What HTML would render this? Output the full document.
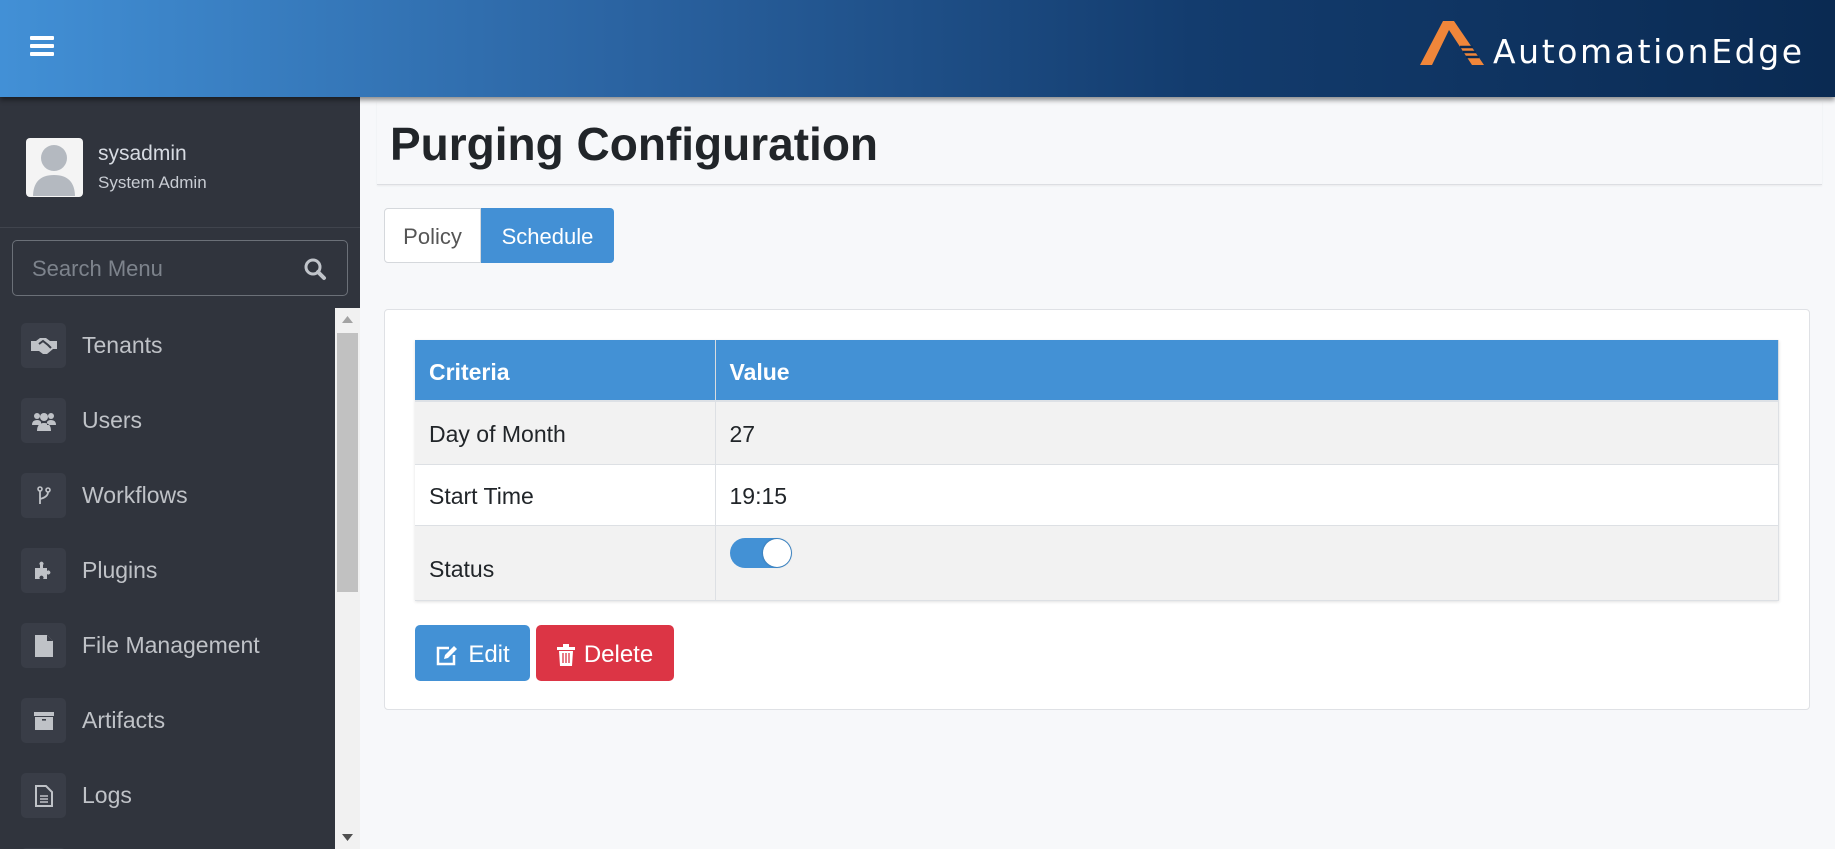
<!DOCTYPE html>
<html><head><meta charset="utf-8"><style>
*{box-sizing:border-box;margin:0;padding:0}
html,body{width:1835px;height:849px;overflow:hidden}
body{background:#f7f8fa;font-family:"Segoe UI","Liberation Sans",sans-serif;position:relative}
.hdr{position:absolute;left:0;top:0;width:1835px;height:97px;background:linear-gradient(90deg,#4290d6 0%,#2a62a0 35%,#133c6e 65%,#0a2a52 100%);box-shadow:0 3px 5px rgba(0,0,0,.45);z-index:3}
.burger{position:absolute;left:30px;top:36px;width:24px}
.burger i{display:block;height:4px;background:#fff;margin-bottom:4px;border-radius:1px}
.logo{position:absolute;left:1420px;top:18px}
.logotxt{position:absolute;left:1493px;top:32px;color:#fff;font-size:33px;font-family:"DejaVu Sans","Liberation Sans",sans-serif;letter-spacing:2.6px}
.side{position:absolute;left:0;top:97px;width:360px;height:752px;background:#30343d;overflow:hidden}
.av{position:absolute;left:26px;top:41px;width:57px;height:59px;background:#f4f4f4;border-radius:4px;overflow:hidden}
.uname{position:absolute;left:98px;top:45px;color:#d7dbe2;font-size:21px}
.urole{position:absolute;left:98px;top:76px;color:#c8ccd3;font-size:17px}
.div{position:absolute;left:0;top:130px;width:360px;height:1px;background:#40444d}
.search{position:absolute;left:12px;top:143px;width:336px;height:56px;border:1px solid #6b7078;border-radius:5px}
.search span{position:absolute;left:19px;top:15px;font-size:22px;color:#7d838c;font-weight:300}
.search svg{position:absolute;left:290px;top:16px}
.item{position:absolute;left:21px;width:300px;height:45px}
.item .ib{position:absolute;left:0;top:0;width:45px;height:45px;background:#393d47;border-radius:5px;display:flex;align-items:center;justify-content:center}
.item .t{position:absolute;left:61px;top:9px;font-size:23px;color:#bfc2c7;font-weight:300;white-space:nowrap}
.sb{position:absolute;left:335px;top:211px;width:25px;height:541px;background:#f1f1f1}
.sb .th{position:absolute;left:2px;top:25px;width:21px;height:259px;background:#c1c1c1}
.title{position:absolute;left:377px;top:101px;width:1445px;height:84px;background:#f7f8fa;border-bottom:1px solid #dcdee2;box-shadow:0 1px 2px rgba(0,0,0,.06)}
.title h1{position:absolute;left:13px;top:16px;font-size:46px;font-weight:600;color:#212529}
.tabs{position:absolute;left:384px;top:208px;height:55px;display:flex;font-size:22px}
.tab1{width:97px;border:1px solid #d5d8dc;border-radius:4px 0 0 4px;background:#fff;color:#555;text-align:center;line-height:56px}
.tab2{width:133px;background:#4390d5;color:#fff;border-radius:0 4px 4px 0;text-align:center;line-height:58px}
.card{position:absolute;left:384px;top:309px;width:1426px;height:401px;background:#fff;border:1px solid #dfe1e5;border-radius:4px}
table{position:absolute;left:415px;top:340px;width:1364px;border-collapse:collapse;font-size:23px;color:#212529;box-shadow:0 1px 3px rgba(0,0,0,.12)}
th{background:#4391d5;color:#fff;text-align:left;font-weight:700;height:61px;padding:4px 0 0 14px;border-right:1px solid #d8dce0;border-bottom:2px solid #dde1e6}
td{padding:4px 0 0 14px;border:1px solid #dde0e4;border-left:none}
td:first-child,th:first-child{width:300px}
tr.g td{background:#f2f2f2}
.btn{position:absolute;top:625px;height:56px;border-radius:5px;color:#fff;font-size:24px;display:flex;align-items:center;justify-content:center;gap:9px;padding-top:3px}
</style></head><body>
<div class="hdr">
 <div class="burger"><i></i><i></i><i></i></div>
 <svg class="logo" width="70" height="50" viewBox="0 0 70 50"><path d="M0 47 L23 3 L34 3 L64 47 L52 47 L29 12 L12 47Z" fill="#f0863a"/><path d="M40 29 h13 M43 34 h13 M46 39 h13" stroke="#0a2a52" stroke-width="2.5"/></svg>
 <div class="logotxt">AutomationEdge</div>
</div>
<div class="side">
 <div class="av"><svg width="57" height="59" viewBox="0 0 57 59"><circle cx="28" cy="20" r="13" fill="#b4b9c0"/><path d="M6 59 Q6 36 28 36 Q50 36 50 59Z" fill="#b4b9c0" stroke="#f4f4f4" stroke-width="2"/></svg></div>
 <div class="uname">sysadmin</div>
 <div class="urole">System Admin</div>
 <div class="div"></div>
 <div class="search"><span>Search Menu</span><svg width="24" height="24" viewBox="0 0 24 24"><circle cx="10" cy="10" r="7" fill="none" stroke="#c0c4ca" stroke-width="3"/><path d="M15 15 L21 21" stroke="#c0c4ca" stroke-width="4" stroke-linecap="round"/></svg></div>
 <div class="item" style="top:226px"><div class="ib"><svg width="28" height="18" viewBox="0 0 28 18"><path d="M1 4h5l4-3h6l4 3h7v8h-4l-6 5h-4l-4-3H1z" fill="#bfc2c7"/><path d="M9 7l4-3 5 4 3 3" stroke="#393d47" stroke-width="2" fill="none"/></svg></div><div class="t">Tenants</div></div>
 <div class="item" style="top:301px"><div class="ib"><svg width="24" height="20" viewBox="0 0 24 20"><circle cx="5" cy="5" r="3" fill="#bfc2c7"/><circle cx="19" cy="5" r="3" fill="#bfc2c7"/><circle cx="12" cy="6" r="4" fill="#bfc2c7"/><path d="M0 14q0-5 5-5q3 0 4 2v3zM24 14q0-5-5-5q-3 0-4 2v3zM5 20q0-8 7-8q7 0 7 8z" fill="#bfc2c7"/></svg></div><div class="t">Users</div></div>
 <div class="item" style="top:376px"><div class="ib"><svg width="14" height="20" viewBox="0 0 14 20"><circle cx="3" cy="3" r="2" fill="none" stroke="#bfc2c7" stroke-width="1.6"/><circle cx="11" cy="4" r="2" fill="none" stroke="#bfc2c7" stroke-width="1.6"/><path d="M3 5v13M11 6q0 5-8 7" stroke="#bfc2c7" stroke-width="1.8" fill="none"/></svg></div><div class="t">Workflows</div></div>
 <div class="item" style="top:451px"><div class="ib"><svg width="22" height="20" viewBox="0 0 22 20"><path d="M2 7h5V4a2 2 0 1 1 3 0v3h4v3a2 2 0 1 1 0 3v5H10a2 2 0 1 0-3 0H2z" fill="#bfc2c7"/></svg></div><div class="t">Plugins</div></div>
 <div class="item" style="top:526px"><div class="ib"><svg width="20" height="24" viewBox="0 0 20 24"><path d="M1 1h12l6 6v16H1z" fill="#bfc2c7"/><path d="M13 1v6h6" fill="#393d47"/></svg></div><div class="t">File Management</div></div>
 <div class="item" style="top:601px"><div class="ib"><svg width="20" height="18" viewBox="0 0 20 18"><rect x="0" y="0" width="20" height="4" fill="#bfc2c7"/><rect x="1" y="5" width="18" height="13" fill="#bfc2c7"/><rect x="8" y="7" width="4" height="1.6" fill="#393d47"/></svg></div><div class="t">Artifacts</div></div>
 <div class="item" style="top:676px"><div class="ib"><svg width="20" height="22" viewBox="0 0 20 22"><path d="M2 1h10l6 6v14H2z" fill="none" stroke="#bfc2c7" stroke-width="2"/><path d="M6 11h8M6 14h8M6 17h8" stroke="#bfc2c7" stroke-width="1.6"/></svg></div><div class="t">Logs</div></div>
 <div class="item" style="top:751px"><div class="ib"></div></div>
 <div class="sb"><div class="th"></div>
  <svg style="position:absolute;left:7px;top:8px" width="11" height="7"><path d="M0 7L5.5 0 11 7z" fill="#a3a3a3"/></svg>
  <svg style="position:absolute;left:7px;top:526px" width="11" height="7"><path d="M0 0L5.5 7 11 0z" fill="#505050"/></svg>
 </div>
</div>
<div class="title"><h1>Purging Configuration</h1></div>
<div class="tabs"><div class="tab1">Policy</div><div class="tab2">Schedule</div></div>
<div class="card"></div>
<table>
<tr><th>Criteria</th><th>Value</th></tr>
<tr class="g"><td style="height:63px">Day of Month</td><td>27</td></tr>
<tr><td style="height:61px">Start Time</td><td>19:15</td></tr>
<tr class="g"><td style="height:75px;padding-top:14px">Status</td><td style="vertical-align:top;padding-top:12px"><div style="width:62px;height:30px;background:#4391d5;border-radius:15px;position:relative"><div style="position:absolute;right:1px;top:1px;width:28px;height:28px;border-radius:50%;background:#fff;box-shadow:0 0 2px rgba(0,0,0,.3)"></div></div></td></tr>
</table>
<div class="btn" style="left:415px;width:115px;background:#4391d5"><svg width="24" height="22" viewBox="0 0 24 22"><path d="M14 4H3v16h16V11" fill="none" stroke="#fff" stroke-width="2.5"/><path d="M9 15l1-4 9-9 3 3-9 9z" fill="#fff"/></svg>Edit</div>
<div class="btn" style="left:536px;width:138px;background:#dc3545"><svg width="18" height="22" viewBox="0 0 18 22"><path d="M0 3h18v3H0zM6 0h6v3H6zM2 7h14l-1 15H3z" fill="#fff"/><path d="M6 9v10M9 9v10M12 9v10" stroke="#dc3545" stroke-width="1.3"/></svg>Delete</div>
</body></html>
